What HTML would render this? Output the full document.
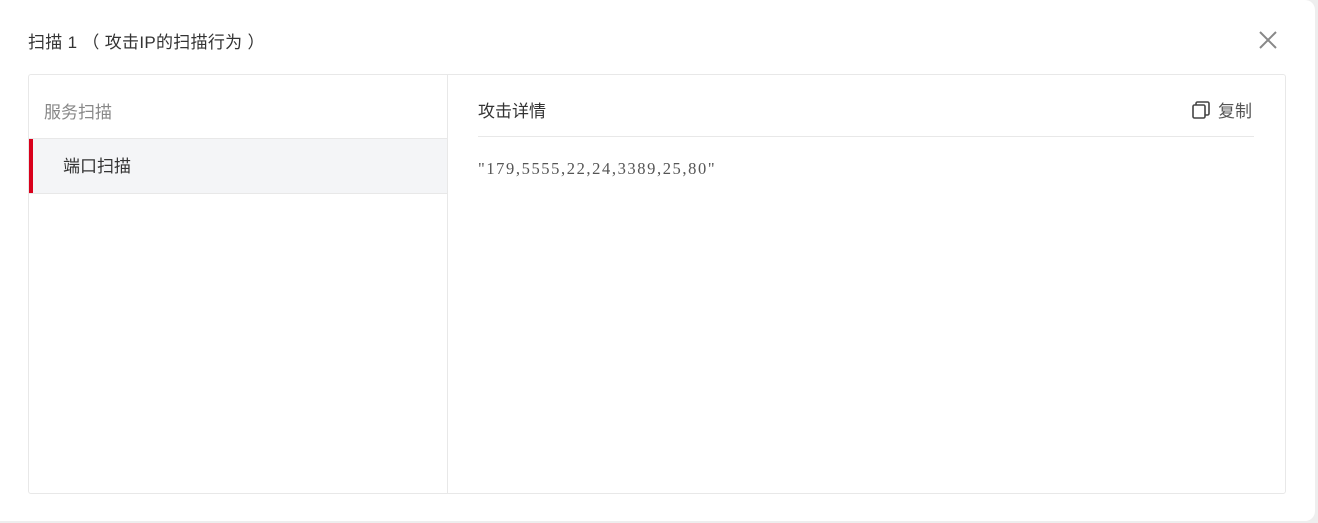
<!DOCTYPE html>
<html><head><meta charset="utf-8"><style>
html,body{margin:0;padding:0;width:1318px;height:523px;background:#eeeeee;overflow:hidden;font-family:"Liberation Sans","Noto Sans CJK SC",sans-serif;}
.dlg{position:absolute;left:0;top:0;width:1315px;height:521px;background:#fff;border-radius:0 10px 10px 0;}
.title{position:absolute;left:28px;top:28px;font-size:17px;color:#333;letter-spacing:0.3px;}
.close{position:absolute;left:1258px;top:30px;}
.box{position:absolute;left:28px;top:74px;width:1256px;height:418px;border:1px solid #e8e8e8;border-radius:3px;}
.left{position:absolute;left:0;top:0;width:418px;height:418px;border-right:1px solid #e8e8e8;}
.lh{position:absolute;left:15px;top:23px;font-size:17px;color:#888;}
.item{position:absolute;left:0;top:63px;width:418px;height:54px;background:#f4f5f7;border-top:1px solid #e8e8e8;border-bottom:1px solid #e8e8e8;}
.item .bar{position:absolute;left:0;top:0;width:4px;height:54px;background:#d9001b;}
.item span{position:absolute;left:34px;top:13px;font-size:17px;color:#333;}
.rh{position:absolute;left:449px;top:22px;font-size:17px;color:#333;}
.copy{position:absolute;left:1163px;top:22px;font-size:17px;color:#555;display:flex;align-items:center;gap:8px;}
.hr{position:absolute;left:449px;top:61px;width:776px;height:1px;background:#e8e8e8;}
.txt{position:absolute;left:449px;top:84px;font-family:"Liberation Serif","Noto Serif CJK SC",serif;font-size:16.5px;color:#555;letter-spacing:1.6px;}
</style></head><body>
<div class="dlg">
<div class="title">扫描 1 （ 攻击IP的扫描行为 ）</div>
<svg class="close" width="20" height="20" viewBox="0 0 20 20"><path d="M2 2L18 18M18 2L2 18" stroke="#888" stroke-width="2"/></svg>
<div class="box">
<div class="left"><div class="lh">服务扫描</div><div class="item"><div class="bar"></div><span>端口扫描</span></div></div>
<div class="rh">攻击详情</div>
<div class="copy"><svg width="18" height="18" viewBox="0 0 18 18"><rect x="1" y="4" width="12" height="13" rx="1.5" fill="none" stroke="#444" stroke-width="1.6"/><path d="M4 4V2.5A1.5 1.5 0 0 1 5.5 1H15.5A1.5 1.5 0 0 1 17 2.5V12.5A1.5 1.5 0 0 1 15.5 14H13" fill="none" stroke="#444" stroke-width="1.6"/></svg><span>复制</span></div>
<div class="hr"></div>
<div class="txt">"179,5555,22,24,3389,25,80"</div>
</div>
</div>
</body></html>
